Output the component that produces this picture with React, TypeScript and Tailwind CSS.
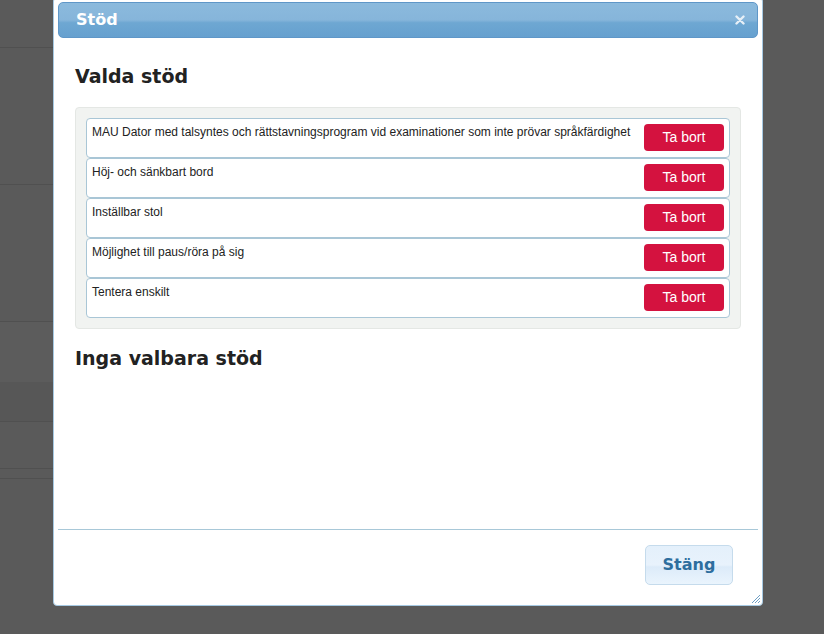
import React from 'react';

const items = [
  'MAU Dator med talsyntes och rättstavningsprogram vid examinationer som inte prövar språkfärdighet',
  'Höj- och sänkbart bord',
  'Inställbar stol',
  'Möjlighet till paus/röra på sig',
  'Tentera enskilt',
];

const App: React.FC = () => {
  return (
    <div className="relative w-[824px] h-[634px] overflow-hidden bg-[#5a5a5a]" style={{ fontFamily: '"Liberation Sans", Arial, sans-serif' }}>
      {/* page behind the overlay */}
      <div className="flex flex-col w-[60px]">
        <div className="h-[48px] border-b border-[#505050]" />
        <div className="h-[137px] border-b border-[#505050]" />
        <div className="h-[137px] border-b border-[#505050]" />
        <div className="h-[60px] bg-[#5c5c5c]" />
        <div className="h-[40px] border-b border-[#505050] bg-[#575757]" />
        <div className="h-[47px] border-b border-[#505050]" />
        <div className="h-[10px] border-b border-[#505050]" />
      </div>

      {/* dialog */}
      <div className="absolute left-[53px] top-[-3px] w-[710px] h-[609px] flex flex-col p-[4px] bg-white border border-[#a6c9e2] rounded-[4px]">
        <div
          className="h-[36px] shrink-0 flex items-center justify-between pl-[17px] pr-[12px] rounded-[5px] border border-[#5f97c8]"
          style={{ background: 'linear-gradient(to bottom, #8bbadd 0%, #86b5da 50%, #6ea7d2 58%, #66a0cf 100%)' }}
        >
          <span className="text-white font-bold text-[16px]" style={{ fontFamily: '"DejaVu Sans", sans-serif' }}>Stöd</span>
          <svg width="10" height="10" viewBox="0 0 10 10">
            <path d="M1.5 1.5 L8.5 8.5 M8.5 1.5 L1.5 8.5" stroke="#e6eff7" strokeWidth="2.4" strokeLinecap="round" />
          </svg>
        </div>

        <div className="flex-1 px-[17px] pt-[24px]">
          <h2 className="text-[19px] leading-[28px] font-bold text-[#222222] mb-[17px]" style={{ fontFamily: '"DejaVu Sans", sans-serif' }}>Valda stöd</h2>
          <div className="bg-[#f1f3f1] border border-[#e4e7e4] rounded-[4px] p-[10px]">
            {items.map((t) => (
              <div key={t} className="h-[40px] flex items-start justify-between pl-[5px] pr-[5px] pt-[5px] bg-white border border-[#a9c6d6] rounded-[4px]">
                <span className="text-[12px] leading-[15px] pt-[1px] text-[#222222]">{t}</span>
                <button className="w-[80px] h-[27px] shrink-0 rounded-[4px] bg-[#d4123f] text-white text-[14px]">Ta bort</button>
              </div>
            ))}
          </div>
          <h2 className="mt-[15px] text-[19px] leading-[28px] font-bold text-[#222222]" style={{ fontFamily: '"DejaVu Sans", sans-serif' }}>Inga valbara stöd</h2>
        </div>

        <div className="h-[72px] shrink-0 border-t border-[#a8c8d8] flex justify-end items-start pt-[15px] pr-[25px]">
          <button
            className="w-[88px] h-[40px] rounded-[5px] border border-[#c5dbec] text-[#2e6e9e] font-bold text-[16px]"
            style={{ fontFamily: '"DejaVu Sans", sans-serif', background: 'linear-gradient(to bottom, #e4f0fb 0%, #e8f2fc 50%, #dcebf9 55%, #eaf4fd 100%)' }}
          >
            Stäng
          </button>
        </div>

        <svg className="absolute right-[1px] bottom-[1px]" width="12" height="12" viewBox="0 0 12 12">
          <path d="M11 3 L3 11 M11 6 L6 11 M11 9 L9 11" stroke="#6f9fc4" strokeWidth="1" />
        </svg>
      </div>
    </div>
  );
};

export default App;
